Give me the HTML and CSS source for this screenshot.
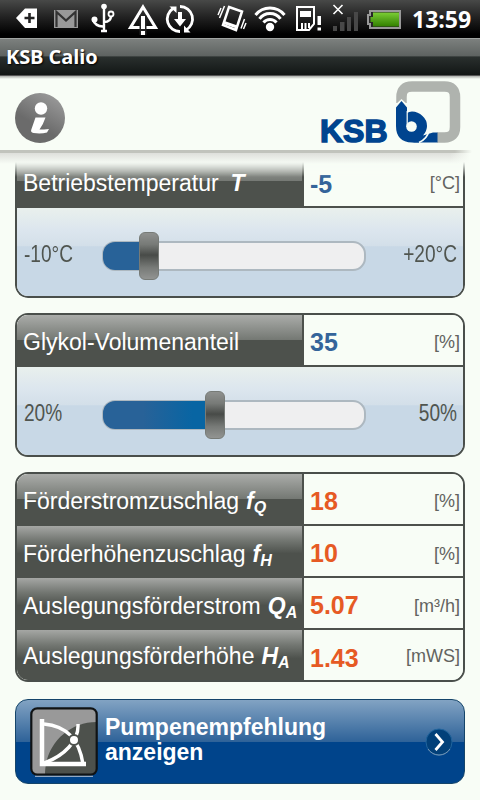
FILE: index.html
```html
<!DOCTYPE html>
<html lang="de">
<head>
<meta charset="utf-8">
<title>KSB Calio</title>
<link rel="stylesheet" href="styles.css">
</head>
<body>
<div class="status">
  <svg class="status-icons" width="404" height="38" viewBox="0 0 404 38">
    <path d="M16 18L25 8.500H37V28H25Z" fill="#fff"/>
    <path d="M29.500 13V23M24.500 18H34.500" stroke="#222" stroke-width="2.600"/>
    <rect x="54" y="10" width="24" height="18" fill="#999"/>
    <path d="M56.500 27V12L66 20.500L75.500 12V27" fill="none" stroke="#333" stroke-width="2.200"/>
    <g fill="none" stroke="#fff" stroke-width="2.400">
      <path d="M104 7V31M101 31H107M93 20Q95 26 103 26.500M104 22Q111 22 111 16"/>
      <circle cx="111" cy="14" r="2.500" stroke-width="1.800"/>
    </g>
    <circle cx="104" cy="6.500" r="2.800" fill="#fff"/><circle cx="94.500" cy="19.500" r="3" fill="#fff"/>
    <path d="M143 7L155.500 27.500H130.500Z" fill="none" stroke="#fff" stroke-width="3"/>
    <path d="M143 15.500V35" stroke="#222" stroke-width="7"/>
    <path d="M143 16V29M143 31V35" stroke="#fff" stroke-width="4"/>
    <path d="M180 6.500A12.500 12.500 0 0 1 186 30M180 31.500A12.500 12.500 0 0 1 173 8.500" fill="none" stroke="#fff" stroke-width="2.800"/>
    <path d="M169.500 6.500H176.500V13ZM184 25.500V32.500H190.500Z" fill="#fff"/>
    <path d="M178 12H182V19H186L180 26.500L174 19H178Z" fill="#fff"/>
    <g fill="none" stroke="#fff">
      <path d="M229 7L242 11.500L236 30L223 25Z" stroke-width="2.500"/>
      <path d="M224 22.500L237 27" stroke-width="3"/>
      <path d="M224.500 6L219.500 18M221 8L218 15M241 28.500L244.500 19M243.500 29L246 23" stroke-width="1.500"/>
    </g>
    <g fill="none" stroke="#fff" stroke-width="3">
      <path d="M255.500 15A18.500 18.500 0 0 1 284.500 15M259.500 18.800A13 13 0 0 1 280.500 18.800M263.500 22.500A8.500 8.500 0 0 1 276.500 22.500"/>
    </g>
    <circle cx="270" cy="27" r="4.200" fill="#fff"/>
    <path d="M297 7H314V24L309 30H297Z" fill="none" stroke="#fff" stroke-width="2"/>
    <path d="M300 11H311V17H300ZM301 23H303V29H301ZM304.500 23H306.500V29H304.500ZM308 23H310V28H308ZM317.500 16H321V25H317.500ZM317.500 27.500H321V30.500H317.500Z" fill="#fff"/>
    <path d="M333.500 5L342.500 14M342.500 5L333.500 14" stroke="#fff" stroke-width="1.600"/>
    <path d="M333 26H337V31H333ZM340 22H344.500V31H340ZM347 17H351V31H347ZM354 12H358V31H354Z" fill="#484848"/>
    <path d="M370 11H400V28H370V24H368V15H370Z" fill="#282828" stroke="#999" stroke-width="2"/>
    <path d="M373 12.500H399V26.500H373V22H370.500V17H373Z" fill="url(#batt)"/>
    <defs><linearGradient id="batt" x2="0" y2="1"><stop stop-color="#7cce35"/><stop offset=".5" stop-color="#55a51b"/><stop offset="1" stop-color="#328000"/></linearGradient></defs>
  </svg>
  <span class="clock">13:59</span>
</div>
<div class="titlebar"><span class="app-name">KSB Calio</span></div>
<header class="head">
  <svg width="50" height="50" viewBox="0 0 50 50">
    <defs><linearGradient id="info" x1=".7" y1="0" x2=".35" y2=".6"><stop stop-color="#999"/><stop offset="1" stop-color="#6b6b6b"/></linearGradient></defs>
    <circle cx="25" cy="25" r="25" fill="url(#info)"/>
    <circle cx="26" cy="15.500" r="6.200" fill="#fff"/>
    <path d="M20.500 24.500H30.500Q28 32 24.500 36.500Q29 36.500 34 36L32 39.500Q26 41 18.500 40Q15 39.500 16.500 36Z" fill="#fff"/>
  </svg>
  <div class="brand">
    <span class="brand-name">KSB</span>
    <svg width="66" height="64" viewBox="0 0 66 64">
      <path d="M6.500 22V16Q6.500 5.500 17 5.500H49.500Q60 5.500 60 16V46Q60 56.500 49.500 56.500H42" fill="none" stroke="#afb3ae" stroke-width="10.500"/>
      <path d="M-1 25L6.500 18L14 25V30H-1Z" fill="#f8fdf6"/>
      <path d="M1 26.500L6.500 20L12 26.500V32Q14 30.500 17 30.500Q23 30.500 27.500 35Q32 39 32 45Q32 50 28 54.500L38 51.500H42.500V61.500H26Q22 62 17 61.500Q1 61 1 45Z" fill="#00448f"/>
      <circle cx="16.500" cy="45.500" r="5.300" fill="#f8fdf6"/>
      <path d="M12.200 30V46" stroke="#f8fdf6" stroke-width="1.200"/>
      <path d="M24 61.500Q32 58 34 50" fill="none" stroke="#f8fdf6" stroke-width="1.600"/>
    </svg>
  </div>
</header>
<main class="content">
  <section class="card card-first">
    <div class="row">
      <div class="label gloss"><span class="t">Betriebstemperatur</span><b class="sym sym-t">T</b></div>
      <div class="value blue">-5</div><div class="unit">[°C]</div>
    </div>
    <div class="panel">
      <span class="min">-10°C</span>
      <div class="track"><div class="fill" style="width:46px"></div><div class="knob"></div></div>
      <span class="max">+20°C</span>
    </div>
  </section>
  <section class="card">
    <div class="row">
      <div class="label gloss"><span class="t">Glykol-Volumenanteil</span></div>
      <div class="value blue">35</div><div class="unit">[%]</div>
    </div>
    <div class="panel">
      <span class="min">20%</span>
      <div class="track"><div class="fill" style="width:112px"></div><div class="knob"></div></div>
      <span class="max">50%</span>
    </div>
  </section>
  <section class="card results">
    <div class="row"><div class="label gloss"><span class="t">Förderstromzuschlag</span><b class="sym">f<sub>Q</sub></b></div><div class="value">18</div><div class="unit">[%]</div></div>
    <div class="row row-low"><div class="label"><span class="t">Förderhöhenzuschlag</span><b class="sym">f<sub>H</sub></b></div><div class="value">10</div><div class="unit">[%]</div></div>
    <div class="row row-low"><div class="label"><span class="t">Auslegungsförderstrom</span><b class="sym">Q<sub>A</sub></b></div><div class="value">5.07</div><div class="unit">[m³/h]</div></div>
    <div class="row row-last"><div class="label"><span class="t">Auslegungsförderhöhe</span><b class="sym">H<sub>A</sub></b></div><div class="value">1.43</div><div class="unit">[mWS]</div></div>
  </section>
  <div class="action">
    <svg class="chart" width="68" height="70" viewBox="0 0 68 70">
      <rect x="1.500" y="1.500" width="65" height="66" rx="6" fill="#4d514c"/>
      <path d="M15 67.500H8Q1.500 67.500 1.500 61V8Q1.500 1.500 8 1.500H60Q66.500 1.500 66.500 8V15C38 15 15 38 15 67.500Z" fill="#999"/>
      <rect x="1.300" y="1.300" width="65.400" height="66.400" rx="6" fill="none" stroke="#101314" stroke-width="2.200"/>
      <path d="M5 69.300H63" stroke="#b8c5d2"/>
      <g fill="none" stroke="#fff">
        <path d="M12 12V57H56" stroke-width="4.500"/>
        <path d="M14 17C36 19 49 31 53 57M14 56C34 49 49 34 48 17" stroke-width="3.400"/>
      </g>
      <circle cx="44" cy="33" r="5" fill="#fff" stroke="#4d514c" stroke-width="2"/>
    </svg>
    <div class="action-text">Pumpenempfehlung<br>anzeigen</div>
    <svg class="go" width="28" height="28" viewBox="0 0 28 28">
      <circle cx="14" cy="14" r="13" fill="#024079" stroke="#20649d"/>
      <path d="M3 21A13 13 0 0 0 25 21" fill="none" stroke="#7797b5"/>
      <path d="M10.500 6L17.500 14L10.500 22" fill="none" stroke="#fff" stroke-width="2.800"/>
    </svg>
  </div>
</main>
</body>
</html>
```

FILE: styles.css
```css
* { box-sizing: border-box; }
body { margin: 0; width: 480px; height: 800px; overflow: hidden; background: #f8fdf6; font-family: "Liberation Sans", Arial, sans-serif; }
svg { display: block; flex: none; }
.status { height: 38px; display: flex; background: linear-gradient(#484948, #222 45%, #000 90%); }
.clock { padding-left: 8px; font: bold 23px/38px "Open Sans", sans-serif; color: #fff; white-space: nowrap; }
.titlebar { height: 38px; padding-left: 6px; border-top: 1px solid #a0a4a2; border-bottom: 1px solid #555; background: linear-gradient(#7c807e, #5d6260 48%, #2a302e 49%, #121615); color: #fff; }
.app-name { font: bold 20px/36px "Open Sans", sans-serif; letter-spacing: -0.1px; text-shadow: 1px 1px 2px #000; }
.head { height: 74px; padding: 17px 19px 0 15px; display: flex; justify-content: space-between; background: linear-gradient(#aaada9, #f8fdf6 3px); }
.brand { display: flex; margin-top: -12px; }
.brand-name { display: block; width: 76px; margin-top: 32px; font-size: 32px; line-height: 36px; font-weight: bold; color: #00448f; -webkit-text-stroke: 1.500px #00448f; padding-left: 1px; }
.content { padding: 0 15px; background: linear-gradient(to right, #c1c3bc 455px, #f8fdf600 472px) 0 0 / 480px 3px no-repeat, linear-gradient(to right, #f8fdf600 450px, #f8fdf6 470px) 0 3px / 480px 11px no-repeat, linear-gradient(#dedfdb, #f8fdf6) 0 3px / 480px 11px no-repeat; }
.card { width: 450px; border: 2px solid #4a4f4b; border-radius: 13px; overflow: hidden; margin-bottom: 15px; }
.card-first { border-top: 0; border-radius: 0 0 13px 13px; height: 148px; padding-top: 7px; mask-image: linear-gradient(transparent 12px, #000 27px); }
.row { height: 52px; display: flex; align-items: center; border-bottom: 2px solid #4d514c; background: #f8fdf6; }
.card-first .row { height: 51px; }
.label { width: 287px; height: 100%; display: flex; align-items: center; padding: 4px 0 0 6px; flex: none; color: #fff; font-size: 23px; border-right: 2px solid #4d514c; background: linear-gradient(#a5a7a4, #747873 28%, #4d514c 55%); white-space: nowrap; }
.gloss { background: linear-gradient(#aaaca9, #757974 49%, #4d514c 50%); }
.card-first .label { padding-top: 3px; }
.sym { font-style: italic; margin-left: 7px; }
.sym-t { margin-left: 12px; }
.sym sub { font-size: 16px; vertical-align: -4px; line-height: 0; }
.value { padding: 5px 0 0 6px; font-size: 25px; font-weight: bold; color: #e65a24; flex: 1; }
.card-first .value { padding-top: 6px; }
.blue { color: #34649a; }
.unit { padding: 4px 3px 0 0; font-size: 18px; color: #62635f; white-space: nowrap; }
.card-first .unit { padding-top: 3px; }
.row-low .label, .row-low .unit { padding-top: 6px; }
.row-last .label, .row-last .unit { padding-top: 1px; }
.panel { height: 88px; display: flex; align-items: center; padding: 0 6px; font-size: 23px; color: #50554f; background: linear-gradient(#e9f0ed, #dce6ee 25%, #d3dfe9 43%, #c8d8e6 44%); }
.min { width: 78px; margin-left: 1px; flex: none; transform: scaleX(.83); transform-origin: left; padding-top: 4px; }
.max { flex: 1; text-align: right; transform: scaleX(.83); transform-origin: right; padding-top: 4px; }
.track { width: 264px; height: 30px; margin-top: 7px; border: 2px solid #adb8c0; border-radius: 13px; background: #efeff0; display: flex; align-items: center; flex: none; }
.fill { height: 28px; margin-left: -1px; flex: none; border-radius: 12px 0 0 12px; background: linear-gradient(to right, #286298 40px, #0865a3 90px); }
.knob { width: 20px; height: 48px; flex: none; margin-left: -10px; border-radius: 6px; border: 1px solid #777b77; background: linear-gradient(#8f918f, #777a77 25%, #484b48 48%, #777a77 75%, #929492); }
.results { height: 210px; }
.row-last { border-bottom: 0; }
.action { margin-top: 17px; height: 85px; display: flex; border-radius: 13px; border: 1px solid #15456a; background: linear-gradient(#82a3c3, #2f6399 50%, #00448b 51%); padding: 7px 11px 0 14px; color: #fff; }
.action-text { font-size: 23px; line-height: 25px; font-weight: bold; margin: 8px 0 0 7px; flex: 1; white-space: nowrap; }
.go { margin-top: 21px; }
```
